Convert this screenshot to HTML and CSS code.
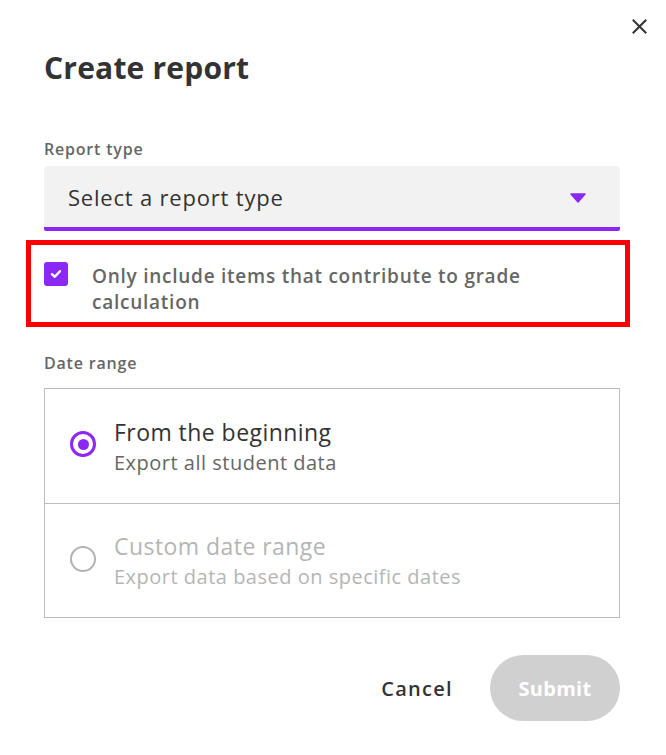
FILE: index.html
```html
<!DOCTYPE html>
<html lang="en">
<head>
<meta charset="utf-8">
<title>Create report</title>
<link rel="stylesheet" href="styles.css">
</head>
<body>
<div class="dialog">
  <div class="close-row">
    <button class="close" aria-label="Close">
      <svg width="15" height="15" viewBox="0 0 15 15"><path d="M1.5 1.5 L13.5 13.5 M13.5 1.5 L1.5 13.5" stroke="#333" stroke-width="2" stroke-linecap="square" fill="none"/></svg>
    </button>
  </div>
  <h1 class="title">Create report</h1>

  <div class="field-label">Report type</div>
  <div class="select">
    <span class="select-text">Select a report type</span>
    <svg class="caret" width="16" height="10" viewBox="0 0 16 10"><path d="M1 1 L15 1 L8 9 Z" fill="#8c28f6" stroke="#8c28f6" stroke-width="1.5" stroke-linejoin="round"/></svg>
  </div>

  <div class="highlight">
    <div class="check-row">
      <span class="checkbox">
        <svg width="12" height="10" viewBox="0 0 12 10"><path d="M2 5.2 L4.8 7.8 L10 2.2" stroke="#fff" stroke-width="2.4" fill="none" stroke-linecap="round" stroke-linejoin="round"/></svg>
      </span>
      <span class="check-text">Only include items that contribute to grade calculation</span>
    </div>
  </div>

  <div class="field-label date-label">Date range</div>
  <div class="radio-group">
    <div class="option">
      <span class="radio checked"><span class="dot"></span></span>
      <div class="option-text">
        <div class="option-title">From the beginning</div>
        <div class="option-sub">Export all student data</div>
      </div>
    </div>
    <div class="option disabled">
      <span class="radio"></span>
      <div class="option-text">
        <div class="option-title">Custom date range</div>
        <div class="option-sub">Export data based on specific dates</div>
      </div>
    </div>
  </div>

  <div class="actions">
    <button class="btn-cancel">Cancel</button>
    <button class="btn-submit">Submit</button>
  </div>
</div>
</body>
</html>
```

FILE: styles.css
```css
* { box-sizing: border-box; }
html, body { margin: 0; padding: 0; background: #fff; }
body {
  font-family: "Open Sans", "Noto Sans", sans-serif;
  color: #333;
  width: 666px;
  height: 755px;
  overflow: hidden;
}
.dialog {
  padding: 19px 19px 0 44px;
}
.close-row {
  display: flex;
  justify-content: flex-end;
  height: 15px;
}
.close {
  border: 0;
  background: none;
  padding: 0;
  width: 15px;
  height: 15px;
  display: block;
  cursor: pointer;
}
.close svg { display: block; }
.title {
  margin: 16px 0 0 0;
  font-family: "Open Sans", sans-serif;
  font-weight: 700;
  font-size: 30px;
  line-height: 36px;
  letter-spacing: 0.2px;
  color: #333;
}
.field-label {
  margin-top: 53px;
  font-size: 16px;
  line-height: 20px;
  font-weight: 600;
  letter-spacing: 0.8px;
  color: #666;
  width: 576px;
}
.select {
  margin-top: 7px;
  width: 576px;
  height: 65px;
  background: #f2f2f2;
  border-bottom: 4px solid #8c28f6;
  border-radius: 3px 3px 2px 2px;
  display: flex;
  align-items: center;
  justify-content: space-between;
  padding: 0 34px 0 24px;
}
.select-text {
  font-size: 22px;
  letter-spacing: 0.8px;
  color: #333;
  padding-top: 1px;
}
.caret { display: block; margin-top: 3px; }
.highlight {
  margin: 9px 0 0 -18px;
  width: 604px;
  border: 5px solid #ff0000;
  padding: 19px 20px 7px 13px;
}
.check-row {
  display: flex;
  align-items: flex-start;
  gap: 24px;
}
.checkbox {
  flex: none;
  width: 24px;
  height: 24px;
  border-radius: 3px;
  background: #8c28f6;
  display: flex;
  align-items: center;
  justify-content: center;
  margin-top: -2px;
}
.checkbox svg { display: block; }
.check-text {
  max-width: 460px;
  font-size: 19px;
  line-height: 26px;
  font-weight: 600;
  letter-spacing: 0.75px;
  color: #666;
  margin-top: -1px;
}
.date-label { margin-top: 26px; }
.radio-group {
  margin-top: 15px;
  width: 576px;
  border: 1px solid #bcbcbc;
}
.option {
  height: 114px;
  display: flex;
  align-items: center;
  padding-left: 25px;
  gap: 18px;
}
.option + .option {
  border-top: 1px solid #bcbcbc;
  height: 114px;
}
.radio {
  flex: none;
  width: 26px;
  height: 26px;
  border-radius: 50%;
  border: 2.5px solid #b3b3b3;
  display: flex;
  align-items: center;
  justify-content: center;
  margin-bottom: 4px;
}
.radio.checked { border: 3px solid #8c28f6; }
.dot {
  width: 11px;
  height: 11px;
  border-radius: 50%;
  background: #8c28f6;
}
.option-title {
  font-size: 23px;
  line-height: 30px;
  letter-spacing: 0.45px;
  color: #333;
}
.option-sub {
  margin-top: 3px;
  font-size: 20px;
  line-height: 26px;
  letter-spacing: 0.5px;
  color: #666;
}
.option.disabled .option-title,
.option.disabled .option-sub { color: #b5b5b5; }
.actions {
  margin-top: 37px;
  width: 576px;
  display: flex;
  justify-content: flex-end;
  align-items: center;
  gap: 37px;
}
.btn-cancel {
  border: 0;
  background: none;
  padding: 0;
  font-family: "Open Sans", sans-serif;
  font-size: 20px;
  font-weight: 600;
  letter-spacing: 1.3px;
  color: #333;
}
.btn-submit {
  border: 0;
  width: 130px;
  height: 66px;
  border-radius: 33px;
  background: #d0d0d0;
  color: #fff;
  font-family: "Open Sans", sans-serif;
  font-size: 20px;
  font-weight: 700;
  letter-spacing: 0.3px;
}
```
